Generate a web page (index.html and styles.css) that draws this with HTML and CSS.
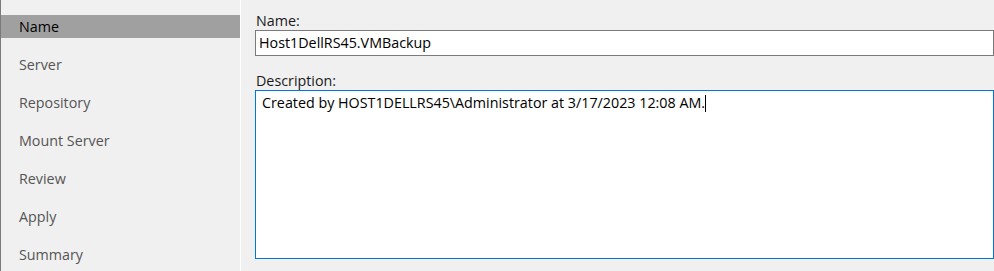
FILE: index.html
```html
<!DOCTYPE html>
<html>
<head>
<meta charset="utf-8">
<link rel="stylesheet" href="styles.css">
</head>
<body>
<div class="wizard">
  <nav class="steps">
    <div class="step active">Name</div>
    <div class="step">Server</div>
    <div class="step">Repository</div>
    <div class="step">Mount Server</div>
    <div class="step">Review</div>
    <div class="step">Apply</div>
    <div class="step">Summary</div>
  </nav>
  <div class="divider"></div>
  <main class="content">
    <div class="label">Name:</div>
    <div class="textbox">Host1DellRS45.VMBackup</div>
    <div class="label label-desc">Description:</div>
    <div class="textarea">Created by HOST1DELLRS45\Administrator at 3/17/2023 12:08 AM.<span class="caret"></span></div>
  </main>
</div>
</body>
</html>
```
FILE: styles.css
```css
html, body {
  margin: 0;
  padding: 0;
  background: #f0f0f0;
}
body {
  font-family: "Open Sans", "Noto Sans", sans-serif;
  font-size: 14.3px;
  color: #000;
  width: 994px;
  height: 271px;
  overflow: hidden;
}
.wizard {
  display: flex;
  height: 271px;
}
.steps {
  width: 239px;
  border-left: 1px solid #7a7a7a;
  background: #f0f0f0;
  padding-top: 15px;
  box-sizing: content-box;
}
.step {
  height: 23px;
  line-height: 23px;
  padding-left: 18px;
  margin-bottom: 15px;
  color: #555555;
}
.step.active {
  background: #a0a0a0;
  color: #000;
}
.divider {
  width: 1px;
  background: #ffffff;
}
.content {
  flex: 1;
  padding-left: 14px;
  padding-top: 11px;
  display: flex;
  flex-direction: column;
}
.label {
  height: 19px;
  line-height: 19px;
  color: #1a1a1a;
  padding-left: 1px;
}
.label-desc {
  margin-top: 15px;
}
.textbox {
  height: 24px;
  line-height: 24px;
  border: 1px solid #7a7a7a;
  background: #fff;
  padding-left: 3px;
}
.textarea {
  height: 165px;
  border: 1px solid #0078d7;
  background: #fff;
  padding: 2px 0 0 6px;
  line-height: 20px;
}
.caret {
  display: inline-block;
  width: 1px;
  height: 17px;
  background: #000;
  vertical-align: -4px;
}
```
